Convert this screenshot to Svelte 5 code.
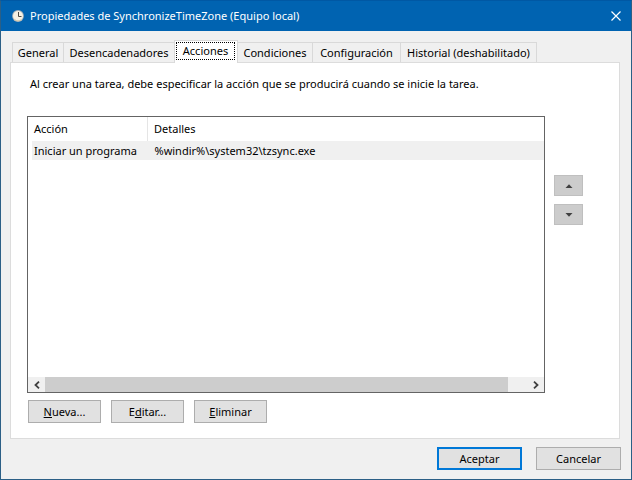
<script>
  const tabs = [
    { label: 'General', width: 52 },
    { label: 'Desencadenadores', width: 111 },
    { label: 'Acciones', width: 64 },
    { label: 'Condiciones', width: 75 },
    { label: 'Configuración', width: 88 },
    { label: 'Historial (deshabilitado)', width: 136 }
  ];
  let active = $state(2);
  const actions = [{ action: 'Iniciar un programa', details: '%windir%\\system32\\tzsync.exe' }];
</script>

<main class="window">
  <header class="titlebar">
    <svg class="clock" width="12" height="12" viewBox="0 0 12 12" aria-hidden="true">
      <circle cx="6" cy="6" r="5.9" fill="#a9b3ba" />
      <circle cx="6" cy="6" r="5" fill="#f6f1e4" />
      <path d="M2.6 9.4A4.8 4.8 0 0 0 9.4 9.4" fill="none" stroke="#d8c9a6" stroke-width="1" />
      <path d="M6.5 2V6.5H9.5" fill="none" stroke="#4d4a44" stroke-width="1" />
    </svg>
    <h1>Propiedades de SynchronizeTimeZone (Equipo local)</h1>
    <button class="close" aria-label="Cerrar">
      <svg width="10" height="10" viewBox="0 0 10 10"><path d="M0.5 0.5L9.5 9.5M9.5 0.5L0.5 9.5" stroke="#fff" stroke-width="1.2" /></svg>
    </button>
  </header>

  <div class="body">
    <div class="tabs" role="tablist">
      {#each tabs as tab, i}
        <button
          class="tab"
          class:active={i === active}
          style:width="{tab.width}px"
          role="tab"
          aria-selected={i === active}
          onclick={() => (active = i)}
        >
          <span>{tab.label}</span>
        </button>
      {/each}
    </div>

    <section class="panel" role="tabpanel">
      <p>Al crear una tarea, debe especificar la acción que se producirá cuando se inicie la tarea.</p>
      <div class="content">
        <div class="list">
          <table>
            <thead>
              <tr><th class="first">Acción</th><th>Detalles</th></tr>
            </thead>
            <tbody>
              {#each actions as row}
                <tr><td>{row.action}</td><td>{row.details}</td></tr>
              {/each}
            </tbody>
          </table>
          <div class="scrollbar">
            <button class="arrow" aria-label="Desplazar a la izquierda">
              <svg width="6" height="8" viewBox="0 0 6 8"><path d="M5 0.7L1.5 4L5 7.3" fill="none" stroke="#404040" stroke-width="1.8" /></svg>
            </button>
            <div class="track"><div class="thumb"></div></div>
            <button class="arrow" aria-label="Desplazar a la derecha">
              <svg width="6" height="8" viewBox="0 0 6 8"><path d="M1 0.7L4.5 4L1 7.3" fill="none" stroke="#404040" stroke-width="1.8" /></svg>
            </button>
          </div>
        </div>
        <div class="order">
          <button class="move" aria-label="Subir">
            <svg width="8" height="4" viewBox="0 0 8 4"><path d="M0.5 4L4 0.3L7.5 4Z" fill="#404040" /></svg>
          </button>
          <button class="move" aria-label="Bajar">
            <svg width="8" height="4" viewBox="0 0 8 4"><path d="M0.5 0L4 3.7L7.5 0Z" fill="#404040" /></svg>
          </button>
        </div>
      </div>
      <div class="actions">
        <button class="btn"><span><u>N</u>ueva...</span></button>
        <button class="btn"><span>E<u>d</u>itar...</span></button>
        <button class="btn"><span><u>E</u>liminar</span></button>
      </div>
    </section>

    <footer>
      <button class="btn wide default">Aceptar</button>
      <button class="btn wide">Cancelar</button>
    </footer>
  </div>
</main>

<style>
  :global(body) {
    margin: 0;
  }
  .window {
    box-sizing: border-box;
    min-height: 100vh;
    display: flex;
    flex-direction: column;
    border: 1px solid #2b5f86;
    border-top-color: #0058a4;
    background: #f0f0f0;
    color: #000;
    font: 11px/16px 'Noto Sans', 'Open Sans', sans-serif;
  }
  button {
    box-sizing: border-box;
    margin: 0;
    padding: 0;
    font: inherit;
    color: inherit;
    display: flex;
    align-items: center;
    justify-content: center;
  }
  svg {
    display: block;
  }
  .titlebar {
    display: flex;
    align-items: center;
    height: 30px;
    padding-left: 11px;
    background: #0063b1;
    color: #fff;
  }
  h1 {
    flex: 1;
    margin: 0 0 0 6px;
    font: inherit;
    white-space: nowrap;
  }
  .close {
    width: 30px;
    height: 30px;
    border: 0;
    background: none;
  }
  .body {
    flex: 1;
    display: flex;
    flex-direction: column;
    padding: 9px 10px 9px 9px;
  }
  .tabs {
    display: flex;
    align-items: flex-end;
    height: 22px;
    padding-left: 2px;
  }
  .tab {
    flex: none;
    height: 20px;
    border: 1px solid #d9d9d9;
    border-bottom: 0;
    border-left-width: 0;
    background: #f0f0f0;
    white-space: nowrap;
  }
  .tab:first-child {
    border-left-width: 1px;
  }
  .tab.active {
    position: relative;
    height: 23px;
    margin-bottom: -1px;
    margin-left: -1px;
    padding: 0 2px 2px 1px;
    border-left-width: 1px;
    background: #fff;
  }
  .tab.active span {
    flex: 1;
    border: 1px dotted #000;
  }
  .panel {
    flex: 1;
    display: flex;
    flex-direction: column;
    margin-right: 1px;
    padding: 13px 36px 15px 16px;
    border: 1px solid #dcdcdc;
    background: #fff;
  }
  p {
    margin: 0 0 24px 3px;
    white-space: nowrap;
  }
  .content {
    flex: 1;
    display: flex;
    gap: 9px;
  }
  .list {
    flex: 1;
    display: flex;
    flex-direction: column;
    justify-content: space-between;
    border: 1px solid #646464;
  }
  table {
    margin-left: 4px;
    border-collapse: collapse;
    text-align: left;
    white-space: nowrap;
  }
  th {
    height: 24px;
    padding: 0 0 0 6px;
    font-weight: 400;
  }
  th.first {
    width: 113px;
    padding-left: 2px;
    border-right: 1px solid #e5e5e5;
  }
  td {
    height: 19px;
    padding: 0 0 0 7px;
    background: #f0f0f0;
  }
  td:first-child {
    padding-left: 2px;
  }
  .scrollbar {
    display: flex;
    height: 15px;
    background: #f0f0f0;
  }
  .arrow {
    width: 17px;
    border: 0;
    background: none;
  }
  .track {
    flex: 1;
  }
  .thumb {
    width: 96%;
    height: 100%;
    background: #cdcdcd;
  }
  .order {
    display: flex;
    flex-direction: column;
    gap: 8px;
    padding-top: 59px;
  }
  .move {
    width: 29px;
    height: 21px;
    border: 1px solid #bfbfbf;
    background: #ccc;
  }
  .actions {
    display: flex;
    gap: 10px;
    margin: 7px 0 0 1px;
  }
  .btn {
    width: 73px;
    height: 23px;
    border: 1px solid #adadad;
    background: #e1e1e1;
  }
  .btn.wide {
    width: 85px;
  }
  .btn.default {
    border: 2px solid #0078d7;
  }
  footer {
    display: flex;
    justify-content: flex-end;
    gap: 14px;
    margin-top: 8px;
  }
</style>
